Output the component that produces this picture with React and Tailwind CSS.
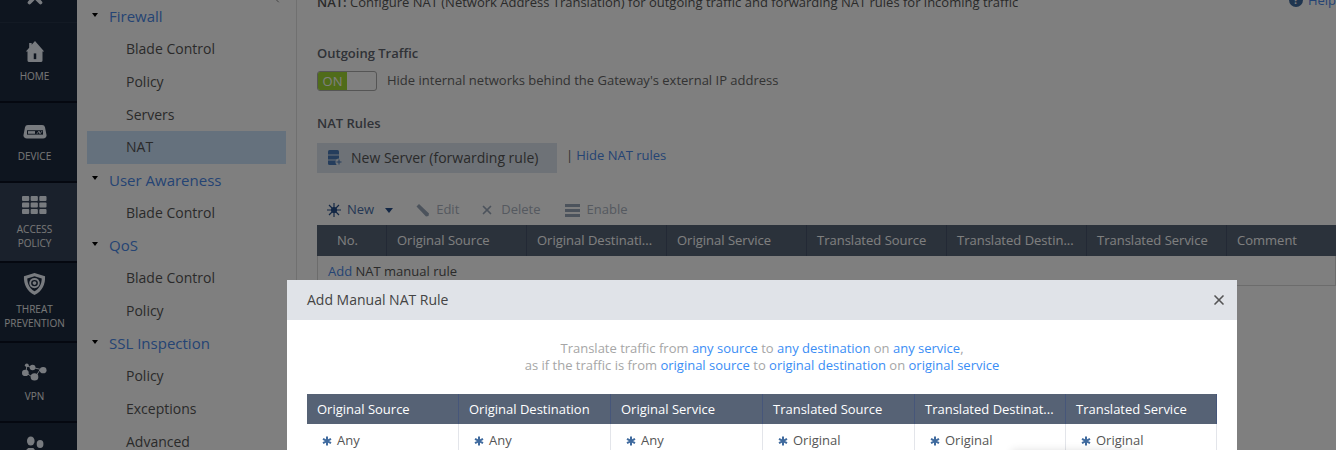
import { X, ChevronLeft } from 'lucide-react';

const font = { fontFamily: '"Open Sans", sans-serif' };

const HomeIcon = () => (
  <svg width="20" height="21" viewBox="0 0 24 22" preserveAspectRatio="none" fill="#f0f6ff">
    <path d="M12 0 23 11h-2v9.500a1.500 1.500 0 0 1-1.500 1.500h-15A1.500 1.500 0 0 1 3 20.500V11H1L5 7V2h3v2z" />
    <rect x="10.500" y="13" width="3" height="6" fill="#1c2a3e" />
  </svg>
);

const DeviceIcon = () => (
  <svg width="24" height="14" viewBox="0 0 24 16" preserveAspectRatio="none">
    <path d="M5 0h14a3 3 0 0 1 3 2.500l1.500 9a3.500 3.500 0 0 1-3.500 4H4A3.500 3.500 0 0 1 .5 11.500l1.500-9A3 3 0 0 1 5 0z" fill="#f0f6ff" />
    <rect x="4" y="6" width="16" height="5" fill="#1c2a3e" />
    <rect x="5" y="7" width="7" height="3" fill="#f0f6ff" />
    <path d="M14 10l2-3 1 3 2-3" stroke="#f0f6ff" fill="none" />
  </svg>
);

const GridIcon = () => (
  <svg width="25" height="18" viewBox="0 0 26 18" preserveAspectRatio="none" fill="#f0f6ff">
    {[0, 6.500, 13].map((y) => (
      <g key={y}>
        <rect x="0" y={y} width="7.500" height="5" rx="1" />
        <rect x="9" y={y} width="7.500" height="5" rx="1" />
        <rect x="18" y={y} width="7.500" height="5" rx="1" />
      </g>
    ))}
  </svg>
);

const ShieldIcon = () => (
  <svg width="23" height="22" viewBox="0 0 24 24" preserveAspectRatio="none">
    <path d="M12 0 23 3.500C23.500 12 20 20 12 24 4 20 .5 12 1 3.500z" fill="#f0f6ff" />
    <path d="M12 3.500 19.500 6C19.500 12 17 17 12 20 7 17 4.500 12 4.500 6z" fill="#1c2a3e" />
    <circle cx="12" cy="11" r="5.500" fill="#f0f6ff" />
    <circle cx="12" cy="11" r="3.500" fill="#1c2a3e" />
    <circle cx="12" cy="11" r="2" fill="#f0f6ff" />
  </svg>
);

const VpnIcon = () => (
  <svg width="25" height="18" viewBox="0 0 26 20" preserveAspectRatio="none" fill="#f0f6ff">
    <path d="M5 3.500 11 5l8 2-6 10L4 11z" fill="none" stroke="#f0f6ff" strokeWidth="1" />
    <circle cx="5" cy="2.500" r="2" />
    <circle cx="11" cy="5" r="3" />
    <circle cx="3.500" cy="11" r="3.500" />
    <circle cx="22" cy="8" r="3.500" />
    <circle cx="13" cy="15.500" r="4" />
  </svg>
);

const UsersIcon = () => (
  <svg width="22" height="24" viewBox="0 0 26 24" preserveAspectRatio="none" fill="#f0f6ff">
    <circle cx="8" cy="5" r="4.500" />
    <path d="M0 24v-8l5-4h6l4 4v8z" />
    <circle cx="19" cy="8" r="4" />
    <path d="M13 24v-7l4-3h4l5 3v7z" />
  </svg>
);

const SmallStar = () => (
  <svg width="10" height="10" viewBox="0 0 10 10" stroke="#3f6a9e" strokeWidth="2" className="shrink-0">
    <path d="M5 .5v9M1 2.800l8 4.400M9 2.800 1 7.200" />
  </svg>
);

const navItems = [
  { icon: <HomeIcon />, label: ['HOME'], top: 'pt-[18px]', gap: 'mt-[7px]' },
  { icon: <DeviceIcon />, label: ['DEVICE'], top: 'pt-[22px]', gap: 'mt-[10px]' },
  { icon: <GridIcon />, label: ['ACCESS', 'POLICY'], top: 'pt-[13px]', gap: 'mt-[8px]', active: true },
  { icon: <ShieldIcon />, label: ['THREAT', 'PREVENTION'], top: 'pt-[10px]', gap: 'mt-[7px]' },
  { icon: <VpnIcon />, label: ['VPN'], top: 'pt-[20px]', gap: 'mt-[8px]' },
  { icon: <UsersIcon />, label: [], top: 'pt-[13px]', gap: '' },
];

const tree = [
  { title: 'Firewall', items: ['Blade Control', 'Policy', 'Servers', 'NAT'] },
  { title: 'User Awareness', items: ['Blade Control'] },
  { title: 'QoS', items: ['Blade Control', 'Policy'] },
  { title: 'SSL Inspection', items: ['Policy', 'Exceptions', 'Advanced'] },
];

const natColumns = ['Original Source', 'Original Destinati...', 'Original Service', 'Translated Source', 'Translated Destin...', 'Translated Service', 'Comment'];

const manualColumns = [
  ['Original Source', 'Any'],
  ['Original Destination', 'Any'],
  ['Original Service', 'Any'],
  ['Translated Source', 'Original'],
  ['Translated Destinat...', 'Original'],
  ['Translated Service', 'Original'],
];

const Sidebar = () => (
  <div className="w-[77px] shrink-0 bg-[#1c2a3e] -mt-[1px] flex flex-col">
    <div className="h-[24px] shrink-0 border-b border-[#263548] pr-[8px] flex justify-center items-end pb-[14px] text-[#f0f6ff]">
      <X size={22} strokeWidth={4} className="shrink-0" />
    </div>
    {navItems.map((item, i) => (
      <div
        key={i}
        className={`h-[80px] shrink-0 pr-[8px] flex flex-col items-center border-b-2 border-[#0a1120] ${item.top} ${item.active ? 'bg-[#344258]' : ''}`}
      >
        {item.icon}
        <div className={`${item.gap} text-[10px] leading-[14px] text-[#eeeeee] text-center font-medium`}>
          {item.label.map((l) => (
            <div key={l}>{l}</div>
          ))}
        </div>
      </div>
    ))}
  </div>
);

const TreePanel = () => (
  <div className="w-[220px] shrink-0 bg-white border-r border-[#e0e0e0] pl-[10px] pr-[10px] pt-[0.4px] relative">
    <ChevronLeft size={12} className="absolute right-[13px] -top-[7px] text-[#888]" />
    {tree.map((group) => (
      <div key={group.title}>
        <div className="h-[32.7px] flex items-center text-[15px] text-[#4a88e8]">
          <span className="ml-[5px] w-0 h-0 border-x-[3.500px] border-x-transparent border-t-[4px] border-t-black -mt-[4px]"></span>
          <span className="ml-[11px]">{group.title}</span>
        </div>
        {group.items.map((name) => (
          <div
            key={name}
            className={`h-[32.7px] flex items-center pl-[39px] text-sm text-[#555] ${name === 'NAT' ? 'bg-[#cbe3fb]' : ''}`}
          >
            {name}
          </div>
        ))}
      </div>
    ))}
  </div>
);

const MainContent = () => (
  <div className="flex-1 min-w-0 pl-[20px] bg-white text-[#555]">
    <div className="flex justify-between h-[14px] -mt-[7px] text-[13px] leading-[18px] whitespace-nowrap">
      <div>
        <span className="font-semibold">NAT:</span> Configure NAT (Network Address Translation) for outgoing traffic and forwarding NAT rules for incoming traffic
      </div>
      <div className="flex items-center gap-[5px] text-[#4a88e8]">
        <span className="w-[14px] h-[14px] rounded-full bg-[#3f6a9e] text-white text-[10px] leading-[14px] text-center font-bold">?</span>
        Help
      </div>
    </div>
    <div className="mt-[37px] text-[13px] leading-[18px] font-semibold text-[#60656e]">Outgoing Traffic</div>
    <div className="mt-[9px] flex items-center gap-[10px]">
      <div className="w-[60px] h-[20px] rounded-[3px] border border-[#aaa] flex overflow-hidden">
        <div className="w-[29px] bg-[#a0d835] text-white text-[13px] leading-[18px] text-center font-medium">ON</div>
      </div>
      <span className="text-[13px] text-[#666]">Hide internal networks behind the Gateway's external IP address</span>
    </div>
    <div className="mt-[23px] text-[13px] leading-[18px] font-semibold text-[#60656e]">NAT Rules</div>
    <div className="mt-[11px] flex items-start">
      <div className="w-[240px] h-[30px] bg-[#dce4ee] flex items-center pl-[10px] gap-[8px] text-sm text-[#555]">
        <svg width="16" height="16" viewBox="0 0 16 16">
          <rect x="1" y="0" width="11" height="15" rx="1.500" fill="#4a7bb8" />
          <path d="M1 5h11M1 10h11" stroke="#dce4ee" />
          <circle cx="12" cy="12" r="3.500" fill="#dce4ee" />
          <path d="M12 9.500v5M9.500 12h5" stroke="#4a7bb8" />
        </svg>
        New Server (forwarding rule)
      </div>
      <div className="ml-[9px] mt-[3px] text-[13px] leading-[18px] text-[#4a88e8]">
        <span className="text-[#666] mr-[3px]">|</span>Hide NAT rules
      </div>
    </div>
    <div className="mt-[26px] h-[22px] flex items-center text-[13px] text-[#aab2bf] pl-[10px]">
      <div className="flex items-center text-[#4a6fa8]">
        <svg width="14" height="14" viewBox="0 0 14 14" stroke="#274f8a" strokeWidth="1.200">
          <circle cx="7" cy="7" r="2.500" fill="#274f8a" />
          <path d="M7 0v14M0 7h14M2 2l10 10M12 2 2 12" />
        </svg>
        <span className="ml-[6px]">New</span>
        <span className="ml-[11px] w-0 h-0 border-x-[4.500px] border-x-transparent border-t-[5px] border-t-[#274f8a]"></span>
      </div>
      <svg className="ml-[23px]" width="13" height="13" viewBox="0 0 13 13" fill="#98a6b8">
        <path d="M3 0 .5 2.500 10 12.500l2.500-.5.500-2.500z" />
      </svg>
      <span className="ml-[7px]">Edit</span>
      <X className="ml-[21px] text-[#98a6b8]" size={14} strokeWidth={3} />
      <span className="ml-[7px]">Delete</span>
      <svg className="ml-[24px]" width="15" height="13" viewBox="0 0 15 13" fill="#98a6b8">
        <rect y="0" width="15" height="3" />
        <rect y="5" width="15" height="3" />
        <rect y="10" width="15" height="3" />
      </svg>
      <span className="ml-[7px]">Enable</span>
    </div>
    <div className="mt-[4px] h-[31px] flex bg-[#566476] text-[13px] font-medium text-white whitespace-nowrap">
      <div className="w-[70px] shrink-0 pl-[20px] leading-[31px] border-r border-[#46536a]">No.</div>
      {natColumns.map((c) => (
        <div key={c} className="w-[140px] shrink-0 pl-[10px] leading-[31px] border-r border-[#46536a] last:border-r-0">
          {c}
        </div>
      ))}
    </div>
    <div className="h-[30px] border border-t-0 border-[#d8d8d8] pl-[10px] text-[13px] leading-[30px] text-[#555]">
      <span className="text-[#4a88e8]">Add</span> NAT manual rule
    </div>
  </div>
);

const AddRuleModal = () => (
  <div className="absolute left-[287px] top-[280px] w-[950px] h-[200px] bg-white">
    <div className="h-[40px] bg-[#e0e3e8] flex items-center justify-between pl-[20px] pr-[10px] text-sm text-[#444]">
      Add Manual NAT Rule
      <X size={16} strokeWidth={2.500} className="text-[#555]" />
    </div>
    <div className="mt-[20px] text-center text-[13px] leading-[17px] text-[#a6a6a6]">
      <div>
        Translate traffic from <span className="text-[#3a8df5]">any source</span> to <span className="text-[#3a8df5]">any destination</span> on <span className="text-[#3a8df5]">any service</span>,
      </div>
      <div>
        as if the traffic is from <span className="text-[#3a8df5]">original source</span> to <span className="text-[#3a8df5]">original destination</span> on <span className="text-[#3a8df5]">original service</span>
      </div>
    </div>
    <div className="mx-[20px] mt-[20px] grid grid-cols-[152px_152px_152px_152px_151px_151px]">
      {manualColumns.map(([head, value]) => (
        <div key={head} className="min-w-0">
          <div className="h-[30px] bg-[#566275] pl-[10px] text-[13px] font-medium leading-[30px] text-white whitespace-nowrap border-r border-[#46567a]">
            {head}
          </div>
          <div className="h-[34px] pl-[15px] flex items-center gap-[5px] text-[13px] text-[#555] border-r border-[#e3e5ea]">
            <SmallStar />
            {value}
          </div>
        </div>
      ))}
    </div>
    {/* dropdown just below the fold, only its shadow shows */}
    <div className="absolute left-[725px] top-[170px] w-[125px] h-[20px] bg-white shadow-[0_0_8px_rgba(0,0,0,0.12)]"></div>
  </div>
);

export default function App() {
  return (
    <div className="relative w-[1336px] h-[450px] overflow-hidden flex bg-white" style={font}>
      <Sidebar />
      <TreePanel />
      <MainContent />
      {/* dim layer behind the dialog */}
      <div className="absolute inset-0 bg-black/50"></div>
      <AddRuleModal />
    </div>
  );
}
